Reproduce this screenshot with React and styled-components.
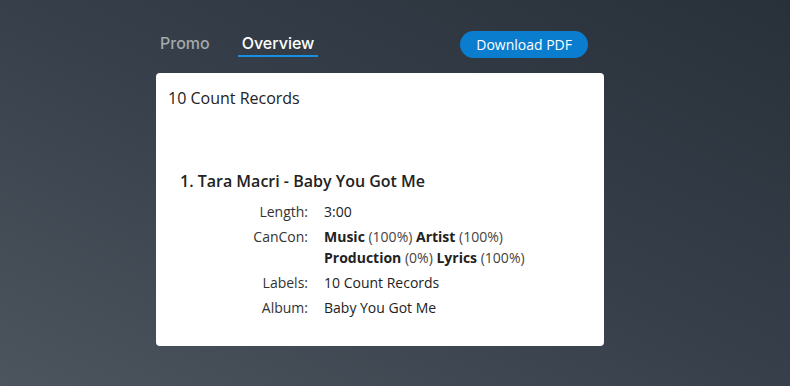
import React from "react";
import styled, { createGlobalStyle } from "styled-components";

const GlobalStyle = createGlobalStyle`
  html, body {
    margin: 0;
    height: 100%;
  }
  body {
    font-family: "Open Sans", "Liberation Sans", sans-serif;
    background: linear-gradient(to top right, #4c555e 0%, #37404a 50%, #28313a 100%);
    background-attachment: fixed;
    min-height: 386px;
  }
`;

const Page = styled.div`
  padding: 28px 186px 0 156px;
`;

const Header = styled.div`
  display: flex;
  align-items: center;
  justify-content: space-between;
  padding-right: 16px;
  height: 29px;
  margin-bottom: 16px;
`;

const Tabs = styled.div`
  display: flex;
  gap: 24px;
  height: 100%;
`;

const Tab = styled.div`
  font-family: Inter, "Liberation Sans", sans-serif;
  font-size: 16px;
  font-weight: 500;
  line-height: 24px;
  padding: 3px 4px 0;
  box-sizing: border-box;
  height: 100%;
  color: ${(p) => (p.$active ? "#ffffff" : "#a3a9ae")};
  border-bottom: 2px solid ${(p) => (p.$active ? "#1790e3" : "transparent")};
`;

const Button = styled.button`
  font-family: "Open Sans", "Liberation Sans", sans-serif;
  font-size: 14px;
  color: #ffffff;
  background: #0a7dcf;
  border: none;
  border-radius: 14px;
  height: 27px;
  padding: 0 16px;
  margin-top: 4px;
`;

const Card = styled.div`
  background: #ffffff;
  border-radius: 4px;
  padding: 13px 12px 28px;
  color: #222;
`;

const Label = styled.div`
  font-size: 16px;
  line-height: 24px;
  margin-bottom: 59px;
`;

const Title = styled.div`
  font-size: 16px;
  font-weight: 600;
  line-height: 24px;
  padding-left: 12px;
  margin-bottom: 8px;
`;

const Details = styled.div`
  display: grid;
  grid-template-columns: 140px auto;
  column-gap: 16px;
  row-gap: 4px;
  font-size: 14px;
  line-height: 21px;
`;

const Key = styled.div`
  text-align: right;
  color: #333;
`;

const Value = styled.div`
  color: #222;
`;

const Pct = styled.span`
  color: #444;
`;

export default function App() {
  return (
    <>
      <GlobalStyle />
      <Page>
        <Header>
          <Tabs>
            <Tab>Promo</Tab>
            <Tab $active>Overview</Tab>
          </Tabs>
          <Button>Download PDF</Button>
        </Header>
        <Card>
          <Label>10 Count Records</Label>
          <Title>1. Tara Macri - Baby You Got Me</Title>
          <Details>
            <Key>Length:</Key>
            <Value>3:00</Value>
            <Key>CanCon:</Key>
            <Value>
              <b>Music</b> <Pct>(100%)</Pct> <b>Artist</b> <Pct>(100%)</Pct>
              <br />
              <b>Production</b> <Pct>(0%)</Pct> <b>Lyrics</b> <Pct>(100%)</Pct>
            </Value>
            <Key>Labels:</Key>
            <Value>10 Count Records</Value>
            <Key>Album:</Key>
            <Value>Baby You Got Me</Value>
          </Details>
        </Card>
      </Page>
    </>
  );
}
